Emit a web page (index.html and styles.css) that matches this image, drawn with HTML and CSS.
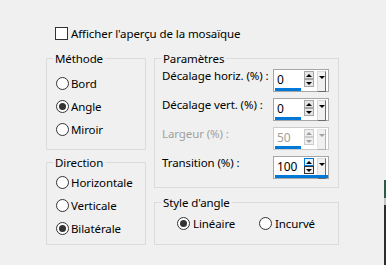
FILE: index.html
```html
<!DOCTYPE html>
<html lang="fr">
<head>
<meta charset="UTF-8" />
<meta name="viewport" content="width=device-width, initial-scale=1" />
<title>Mosaïque - Angle</title>
<link rel="stylesheet" href="styles.css">
</head>
<body>

<div class="dialog">
  <div class="check-row">
    <span class="checkbox"></span>
    <span>Afficher l'aperçu de la mosaïque</span>
  </div>

  <div class="columns">
    <div class="col-left">
      <fieldset class="group methode">
        <legend>Méthode</legend>
        <div class="radio-list">
          <div class="radio"><span class="circle"></span>Bord</div>
          <div class="radio"><span class="circle on"></span>Angle</div>
          <div class="radio"><span class="circle"></span>Miroir</div>
        </div>
      </fieldset>

      <fieldset class="group direction">
        <legend>Direction</legend>
        <div class="radio-list">
          <div class="radio"><span class="circle"></span>Horizontale</div>
          <div class="radio"><span class="circle"></span>Verticale</div>
          <div class="radio"><span class="circle on"></span>Bilatérale</div>
        </div>
      </fieldset>
    </div>

    <div class="col-right">
      <fieldset class="group params">
        <legend>Paramètres</legend>

        <div class="param-row">
          <span class="param-label">Décalage horiz. (%) :</span>
          <div class="spin">
            <span class="val">0</span>
            <span class="up"></span>
            <span class="down"></span>
            <span class="drop"></span>
            <span class="bar" style="width: 26px"></span>
          </div>
        </div>

        <div class="param-row">
          <span class="param-label">Décalage vert. (%) :</span>
          <div class="spin">
            <span class="val">0</span>
            <span class="up"></span>
            <span class="down"></span>
            <span class="drop"></span>
            <span class="bar" style="width: 26px"></span>
          </div>
        </div>

        <div class="param-row disabled">
          <span class="param-label">Largeur (%) :</span>
          <div class="spin">
            <span class="val">50</span>
            <span class="up"></span>
            <span class="down"></span>
            <span class="drop"></span>
            <span class="bar" style="width: 26px"></span>
          </div>
        </div>

        <div class="param-row focused">
          <span class="param-label">Transition (%) :</span>
          <div class="spin">
            <span class="val">100</span>
            <span class="up"></span>
            <span class="down"></span>
            <span class="drop"></span>
            <span class="bar full"></span>
          </div>
        </div>
      </fieldset>

      <fieldset class="group style-angle">
        <legend>Style d'angle</legend>
        <div class="radio-inline">
          <div class="radio first"><span class="circle on"></span>Linéaire</div>
          <div class="radio"><span class="circle"></span>Incurvé</div>
        </div>
      </fieldset>
    </div>
  </div>
</div>

<div class="edge"></div>

</body>
</html>
```

FILE: styles.css
```css
body { margin: 0; height: 265px; overflow: hidden; background: #f0f0f0; color: #000; font-family: "Noto Sans", "Open Sans", sans-serif; font-size: 11.5px; letter-spacing: -0.1px; line-height: 15px; }

.dialog { padding: 26px 0 0 46px; }

.check-row { display: flex; align-items: center; gap: 3px; height: 15px; margin-left: 9px; }
.checkbox { width: 13px; height: 13px; box-sizing: border-box; border: 1px solid #333; background: #fff; }

.columns { display: flex; gap: 8px; margin-top: 10px; }
.col-left { width: 100px; display: flex; flex-direction: column; gap: 5px; }
.col-right { width: 185px; display: flex; flex-direction: column; gap: 7px; }

.group { margin: 0; padding: 0; min-width: 0; border: 1px solid #dcdcdc; }
.group legend { margin-left: 6px; padding: 0 2px; line-height: 15px; }

.methode { padding: 6px 0 9px; }
.direction { padding: 1px 0 5px; }
.params { padding: 3px 0 8px; }
.style-angle { padding: 2px 0 10px; }

.radio-list { display: flex; flex-direction: column; gap: 1px; padding-left: 9px; }
.radio { display: flex; align-items: center; gap: 2px; height: 22px; }
.circle { width: 13px; height: 13px; box-sizing: border-box; border: 1px solid #333; border-radius: 50%; background: #fff; display: grid; place-items: center; }
.circle.on::after { content: ""; width: 7px; height: 7px; border-radius: 50%; background: #333; }

.radio-inline { display: flex; padding-left: 22px; }
.radio-inline .radio { gap: 3px; }
.radio-inline .first { width: 82px; }

.param-row { display: flex; justify-content: space-between; align-items: flex-start; height: 23px; padding: 0 9px 0 7px; }
.param-row + .param-row { margin-top: 6px; }
.param-label { margin-top: -1px; }

.spin { width: 56px; height: 23px; box-sizing: border-box; border: 1px solid #a6a6a6; background: #fff; display: grid; grid-template-columns: 30px 10px 3px 9px 2px; grid-template-rows: 1px 8px 8px 1px 3px 1px; }
.val { grid-column: 1; grid-row: 1 / 5; padding: 1px 0 0 3px; align-self: center; font-size: 12px; }
.up, .down { grid-column: 2; box-sizing: border-box; border: 1px solid #a6a6a6; background: #e6e6e6; display: grid; place-items: center; }
.up { grid-row: 2; }
.down { grid-row: 3; }
.up::after { content: ""; border-left: 3px solid transparent; border-right: 3px solid transparent; border-bottom: 3px solid #000; }
.down::after { content: ""; border-left: 3px solid transparent; border-right: 3px solid transparent; border-top: 3px solid #000; }
.drop { grid-column: 4; grid-row: 2 / 7; box-sizing: border-box; border: 1px solid; border-color: #dadada #6b6b6b #6b6b6b #dadada; background: #f0f0f0; display: flex; justify-content: center; padding-top: 4px; }
.drop::after { content: ""; width: 0; height: 0; border-left: 3px solid transparent; border-right: 3px solid transparent; border-top: 3px solid #000; }
.bar { grid-column: 1; grid-row: 5; margin-left: 1px; background: #0078d7; }
.bar.full { grid-column: 1 / -1; width: auto; }

.disabled .param-label, .disabled .val { color: #a0a0a0; }
.disabled .spin { border-color: #cccccc; }
.disabled .up, .disabled .down { border-color: #cccccc; background: #f0f0f0; }
.disabled .up::after { border-bottom-color: #a0a0a0; }
.disabled .down::after, .disabled .drop::after { border-top-color: #a0a0a0; }
.disabled .drop { border-color: #e6e6e6 #b4b4b4 #b4b4b4 #e6e6e6; }

.focused .up { background: #e5f1fb; border-color: #0078d7; }
.focused .down { border-color: #333; background: #f0f0f0; }

.edge { position: fixed; right: 0; top: 180px; width: 2px; height: 85px; background: linear-gradient(#2d5a44 0 18px, #c4c4c4 18px 25px, #2e2e2e 25px); }
```
